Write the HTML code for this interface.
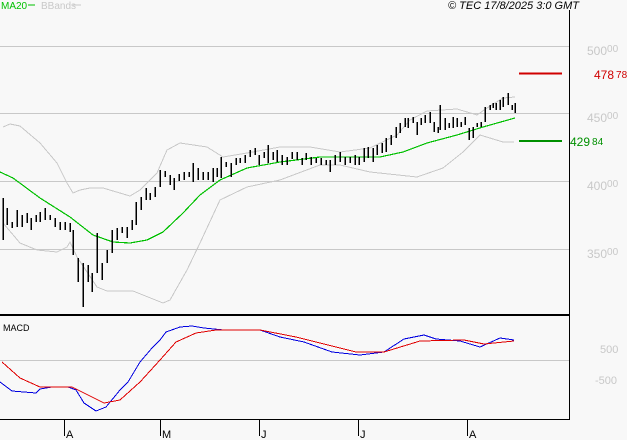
<!DOCTYPE html>
<html><head><meta charset="utf-8"><style>
html,body{margin:0;padding:0;background:#f8f8f8;}
svg{display:block;}
text{font-family:"Liberation Sans",sans-serif;}
</style></head><body>
<svg width="627" height="440" viewBox="0 0 627 440" xmlns="http://www.w3.org/2000/svg">
<rect width="627" height="440" fill="#f8f8f8"/>
<g stroke="#c8c8c8" stroke-width="1" shape-rendering="crispEdges">
<line x1="0" y1="46.5" x2="569" y2="46.5"/>
<line x1="0" y1="113.5" x2="569" y2="113.5"/>
<line x1="0" y1="181.5" x2="569" y2="181.5"/>
<line x1="0" y1="249.5" x2="569" y2="249.5"/>
<line x1="0" y1="360.5" x2="569" y2="360.5"/>
</g>
<g shape-rendering="crispEdges">
<line x1="569.5" y1="10" x2="569.5" y2="420" stroke="#000" stroke-width="1"/>
<line x1="0" y1="315" x2="569" y2="315" stroke="#000" stroke-width="2"/>
<line x1="0" y1="419.5" x2="570" y2="419.5" stroke="#000" stroke-width="1"/>
<g stroke="#000" stroke-width="1">
<line x1="64.5" y1="420" x2="64.5" y2="436"/>
<line x1="160.5" y1="420" x2="160.5" y2="436"/>
<line x1="259.5" y1="420" x2="259.5" y2="436"/>
<line x1="358.5" y1="420" x2="358.5" y2="436"/>
<line x1="467.5" y1="420" x2="467.5" y2="436"/>
</g>
</g>
<g font-size="11" fill="#000">
<text x="66" y="438">A</text><text x="162" y="438">M</text><text x="261" y="438">J</text><text x="360" y="438">J</text><text x="469" y="438">A</text>
</g>
<text x="1" y="9" font-size="10" fill="#00c000">MA20</text>
<line x1="28" y1="5" x2="35" y2="5" stroke="#00c000"/>
<text x="41" y="9" font-size="10" fill="#c8c8c8">BBands</text>
<line x1="73" y1="5" x2="81" y2="5" stroke="#c8c8c8"/>
<text x="448" y="9" font-size="11" font-style="italic" fill="#000">© TEC 17/8/2025 3:0 GMT</text>
<g fill="#c8c8c8">
<text x="587" y="55" font-size="12">500<tspan font-size="10" dy="-3">00</tspan></text>
<text x="587" y="122" font-size="12">450<tspan font-size="10" dy="-3">00</tspan></text>
<text x="587" y="190" font-size="12">400<tspan font-size="10" dy="-3">00</tspan></text>
<text x="587" y="258" font-size="12">350<tspan font-size="10" dy="-3">00</tspan></text>
<text x="600" y="353" font-size="11">500</text>
<text x="595" y="384" font-size="11">-500</text>
</g>
<line x1="519" y1="73.5" x2="562" y2="73.5" stroke="#d00000" stroke-width="2"/>
<text x="594" y="79" font-size="12" fill="#d00000">478<tspan font-size="10" dx="2" dy="-1">78</tspan></text>
<line x1="519" y1="141" x2="562" y2="141" stroke="#009000" stroke-width="2"/>
<text x="570" y="146" font-size="12" fill="#009000">429<tspan font-size="10" dx="2" dy="-1">84</tspan></text>
<text x="3" y="331" font-size="9" fill="#000">MACD</text>
<g fill="none" stroke="#c8c8c8" stroke-width="1" shape-rendering="optimizeSpeed">
<polyline points="3,127 10,124 20,126 40,143 57,163 67,183 73,193 80,190 90,188 103,188 130,196 140,190 157,173 167,150 180,143 207,147 223,157 247,153 280,147 310,147 340,152 370,148 397,135 410,120 427,111 457,109 477,115 487,108 503,98 515,97"/>
<polyline points="3,223 20,243 37,250 57,252 67,247 70,242 77,257 97,287 107,291 133,291 163,303 170,300 187,270 200,243 220,200 247,187 280,180 320,165 340,165 370,172 417,177 443,168 463,152 480,135 503,142 514,142"/>
</g>
<polyline fill="none" stroke="#00c000" stroke-width="1.2" shape-rendering="optimizeSpeed" points="0,172 13,178 40,198 70,217 93,235 113,242 130,243 147,240 163,232 183,213 200,195 220,180 247,168 280,162 320,157 380,157 403,152 427,143 457,135 483,127 515,118"/>
<path fill="none" stroke="#000" stroke-width="1.5" shape-rendering="crispEdges" d="
M3 198V240 M7 208V225 M12 222V228 M17 210V227 M22 215V227 M27 213V223 M31 218V230 M36 215V222 M40 212V222 M45 208V220 M50 215V220 M55 218V227 M60 222V230 M65 222V230
M70 223V232 M73 230V255 M78 258V282 M83 263V307 M88 265V282 M92 273V292 M97 233V273 M102 263V280 M107 250V263 M112 230V253 M117 228V240 M122 227V233 M127 227V238 M132 220V230 M136 202V225 M141 197V210 M146 188V200 M150 193V200 M155 187V197
M160 170V187 M165 171V177 M170 175V185 M174 178V190 M179 174V181 M184 172V180 M189 172V177 M193 163V182 M198 168V180 M203 172V180 M208 172V180 M213 168V182 M217 168V177 M221 157V178 M226 162V167 M231 163V177 M236 158V165 M240 158V163 M245 155V163 M250 150V157 M255 148V155 M259 155V165 M264 152V158 M268 145V163 M273 152V160 M277 150V162 M282 155V165 M287 157V165 M292 152V159 M297 152V160 M302 158V165 M306 153V160 M311 157V165 M316 158V163 M321 158V165 M326 160V165 M330 160V172 M335 155V165 M340 152V162 M345 157V165 M350 157V163 M355 155V165 M359 157V165 M364 148V162 M368 147V158 M373 148V162 M377 145V155 M382 143V153 M386 138V152 M391 135V145 M396 127V138 M400 123V133 M405 118V127 M408 118V128 M413 117V123 M417 122V135 M421 118V125 M425 115V123 M430 112V123 M434 122V132 M438 127V133 M440 105V130 M445 118V130 M449 123V128 M453 117V128 M457 118V127 M461 122V127 M465 117V125 M469 128V140 M473 127V138 M477 123V127 M481 122V127 M485 107V122 M490 105V110 M493 103V108 M496 103V110 M500 100V110 M503 97V107 M508 93V105 M512 105V110 M515 103V113"/>
<polyline fill="none" stroke="#0000e0" stroke-width="1" shape-rendering="optimizeSpeed" points="0,382 12,391 36,393 40,389 52,387 68,387 76,390 84,403 96,411 106,407 120,390 128,382 140,362 152,348 160,340 166,332 180,327 192,326 204,328 224,330 260,330 280,337 304,342 332,352 360,355 384,352 404,339 424,335 436,339 460,341 480,347 500,338 514,340"/>
<polyline fill="none" stroke="#e00000" stroke-width="1" shape-rendering="optimizeSpeed" points="2,362 20,378 40,387 72,387 104,403 120,400 140,382 160,360 176,342 196,333 216,330 260,330 296,337 320,343 356,352 384,352 420,341 464,340 484,344 514,341"/>
</svg>
</body></html>
